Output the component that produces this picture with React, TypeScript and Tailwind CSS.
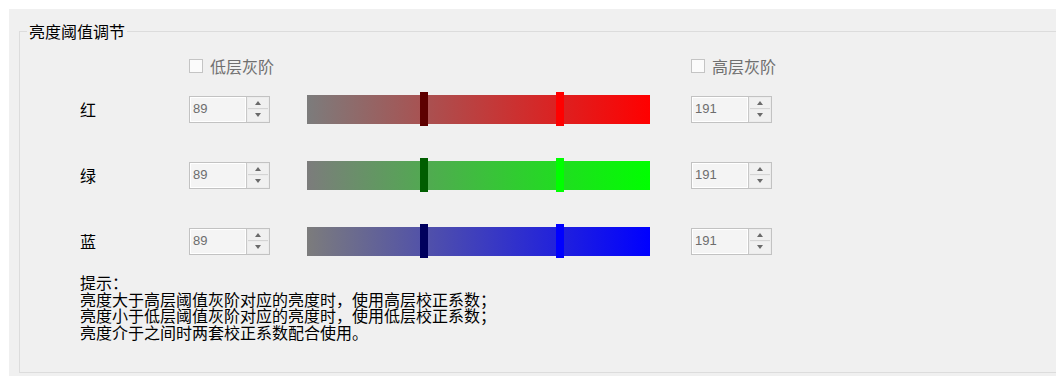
import React from 'react';

const channels = [
  { name: '红', bar: 'bg-[linear-gradient(to_right,#7c7c7c,#ff0000)]', low: 'bg-[#5e0000]', high: 'bg-[#ff0000]' },
  { name: '绿', bar: 'bg-[linear-gradient(to_right,#7c7c7c,#00ff00)]', low: 'bg-[#005e00]', high: 'bg-[#00ff00]' },
  { name: '蓝', bar: 'bg-[linear-gradient(to_right,#7c7c7c,#0000ff)]', low: 'bg-[#00005e]', high: 'bg-[#0000ff]' },
];

const lowValue = 89;
const highValue = 191;

// slider handle offset inside the 343px track
const handleLeft = (v: number) => Math.round((v * 4) / 3 - 6);

function SpinBox({ value }: { value: number }) {
  return (
    <div className="w-[81px] h-[27px] border border-[#c2c2c2] bg-[#f4f4f4] flex">
      <div className="flex-1 border border-white flex items-center pl-[2px] text-[13px] text-[#6d6d6d] font-['Liberation_Sans',sans-serif]">
        {value}
      </div>
      <div className="w-[23px] border-l border-[#c8c8c8] bg-[#ececec] flex flex-col p-[1px] gap-[1px]">
        <div className="flex-1 flex items-center justify-center bg-[#f0f0f0] border-b border-[#d4d4d4]">
          <span className="w-0 h-0 border-l-[3.5px] border-r-[3.5px] border-b-[4px] border-l-transparent border-r-transparent border-b-[#6a6a6a]" />
        </div>
        <div className="flex-1 flex items-center justify-center bg-[#f0f0f0]">
          <span className="w-0 h-0 border-l-[3.5px] border-r-[3.5px] border-t-[4px] border-l-transparent border-r-transparent border-t-[#6a6a6a]" />
        </div>
      </div>
    </div>
  );
}

function CheckLabel({ label }: { label: string }) {
  return (
    <div className="flex items-center gap-[7px]">
      <span className="w-[14px] h-[14px] border border-[#c4c4c4] bg-[#fbfbfb]" />
      <span className="text-[#6f6f6f]">{label}</span>
    </div>
  );
}

export default function App() {
  return (
    <div className="w-[1056px] h-[376px] bg-white pt-[9px] pl-[9px] overflow-hidden font-['Noto_Sans_CJK_SC',sans-serif] text-[16px] text-black">
      <div className="h-[367px] bg-[#f0f0f0] pl-[10px] pt-[12px] overflow-hidden">
        <fieldset className="w-[1100px] h-[352px] border border-r-0 border-[#dcdcdc]">
          <legend className="ml-[7px] px-[2px] leading-[20px]">亮度阈值调节</legend>

          {/* checkbox header */}
          <div className="flex items-center h-[20px] mt-[15px]">
            <div className="w-[169px]" />
            <div className="w-[502px]">
              <CheckLabel label="低层灰阶" />
            </div>
            <CheckLabel label="高层灰阶" />
          </div>

          {/* channel rows */}
          <div className="flex flex-col gap-[30px] mt-[15px]">
            {channels.map((c) => (
              <div key={c.name} className="flex items-center h-[36px]">
                <div className="w-[169px] pl-[60px]">{c.name}</div>
                <SpinBox value={lowValue} />
                <div className="relative w-[343px] h-[29px] ml-[37px] mr-[41px]">
                  <div className={`w-full h-full ${c.bar}`} />
                  <div
                    className={`absolute top-[-3px] w-[8px] h-[34px] ${c.low}`}
                    style={{ left: handleLeft(lowValue) }}
                  />
                  <div
                    className={`absolute top-[-3px] w-[8px] h-[34px] ${c.high}`}
                    style={{ left: handleLeft(highValue) }}
                  />
                </div>
                <SpinBox value={highValue} />
              </div>
            ))}
          </div>

          {/* hint */}
          <div className="pl-[60px] mt-[15px] leading-[16.5px]">
            <div>提示：</div>
            <div>亮度大于高层阈值灰阶对应的亮度时，使用高层校正系数；</div>
            <div>亮度小于低层阈值灰阶对应的亮度时，使用低层校正系数；</div>
            <div>亮度介于之间时两套校正系数配合使用。</div>
          </div>
        </fieldset>
      </div>
    </div>
  );
}
